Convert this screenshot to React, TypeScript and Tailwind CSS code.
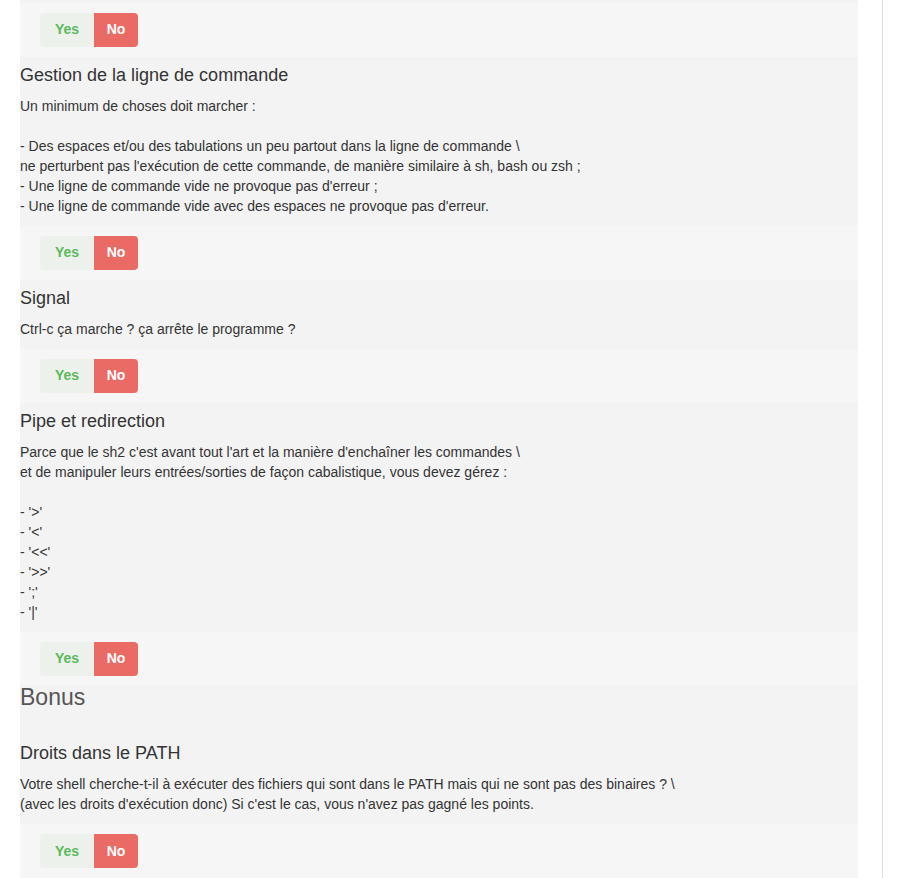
import React from "react";

function ButtonRow() {
  return (
    <div className="bg-[#f6f6f6] h-[54px] pt-[10px] pl-[20px] flex">
      <div className="flex h-[34px]">
        <div className="w-[54px] h-[34px] bg-[#ecf1eb] text-[#5cb85c] text-[14px] font-bold flex items-center justify-center rounded-l-[4px]">
          Yes
        </div>
        <div className="w-[44px] h-[34px] bg-[#ea6a66] text-white text-[14px] font-bold flex items-center justify-center rounded-r-[4px]">
          No
        </div>
      </div>
    </div>
  );
}

function Block({ title, lines }: { title: string; lines: string[] }) {
  return (
    <div className="bg-[#f3f3f3] pt-[8px] pb-[10px]">
      <h4 className="text-[18px] leading-[20px] text-[#333]">{title}</h4>
      <div className="mt-[11px] text-[14px] leading-[20px] text-[#333]">
        {lines.map((l, i) => (
          <div key={i} className="h-[20px] whitespace-pre">
            {l}
          </div>
        ))}
      </div>
    </div>
  );
}

export default function App() {
  return (
    <div
      className="h-[878px] overflow-hidden bg-white flex"
      style={{ fontFamily: '"Liberation Sans", Arial, sans-serif' }}
    >
      <div className="w-[20px] shrink-0" />
      <div className="w-[838px] shrink-0 flex flex-col">
        <div className="h-[3px] bg-[#f3f3f3]" />
        <ButtonRow />
        <Block
          title="Gestion de la ligne de commande"
          lines={[
            "Un minimum de choses doit marcher :",
            "",
            "- Des espaces et/ou des tabulations un peu partout dans la ligne de commande \\",
            "ne perturbent pas l'exécution de cette commande, de manière similaire à sh, bash ou zsh ;",
            "- Une ligne de commande vide ne provoque pas d'erreur ;",
            "- Une ligne de commande vide avec des espaces ne provoque pas d'erreur.",
          ]}
        />
        <ButtonRow />
        <Block title="Signal" lines={["Ctrl-c ça marche ? ça arrête le programme ?"]} />
        <ButtonRow />
        <Block
          title="Pipe et redirection"
          lines={[
            "Parce que le sh2 c'est avant tout l'art et la manière d'enchaîner les commandes \\",
            "et de manipuler leurs entrées/sorties de façon cabalistique, vous devez gérez :",
            "",
            "- '>'",
            "- '<'",
            "- '<<'",
            "- '>>'",
            "- ';'",
            "- '|'",
          ]}
        />
        <ButtonRow />
        <div className="bg-[#f3f3f3] h-[50px]">
          <h3 className="text-[23px] leading-[24px] text-[#555]">Bonus</h3>
        </div>
        <Block
          title="Droits dans le PATH"
          lines={[
            "Votre shell cherche-t-il à exécuter des fichiers qui sont dans le PATH mais qui ne sont pas des binaires ? \\",
            "(avec les droits d'exécution donc) Si c'est le cas, vous n'avez pas gagné les points.",
          ]}
        />
        <ButtonRow />
      </div>
      <div className="w-[25px] shrink-0 border-r border-[#dddddd]" />
      <div className="flex-1" />
    </div>
  );
}
